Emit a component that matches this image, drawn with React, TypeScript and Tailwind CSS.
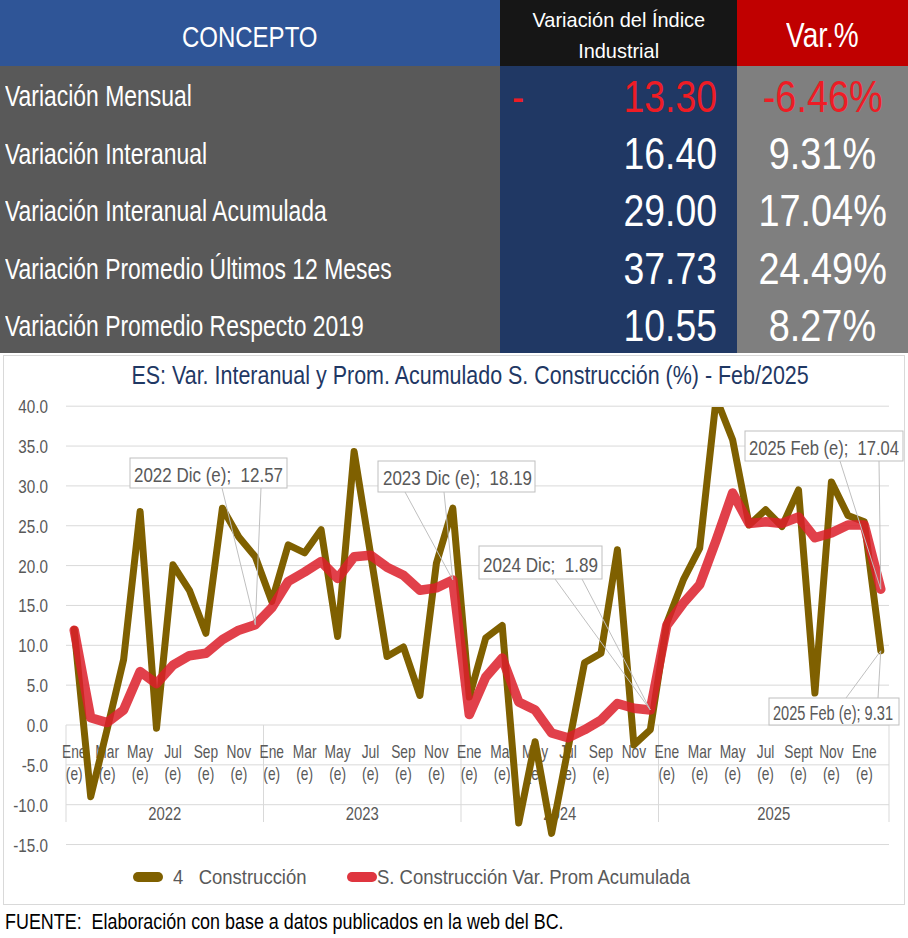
import React from "react";

const brown = [
  12, -9.0, -0.5, 8.2, 26.8, -0.4, 20.1, 16.9, 11.5, 27.2, 23.6, 21.1,
  15.5, 22.6, 21.6, 24.5, 11.1, 34.3, 21.5, 8.6, 9.8, 3.7, 20.3, 27.2,
  3.5, 10.9, 12.5, -12.3, -2.1, -13.6, -3, 7.8, 9.0, 22.0, -2.5, -0.6,
  12.8, 18.2, 22.2, 41, 35.8, 25.1, 27.0, 24.9, 29.5, 4.0, 30.5, 26.3, 25.5, 9.31,
];

const red = [
  11.9, 0.9, 0.3, 1.9, 6.7, 5.2, 7.5, 8.7, 9.0, 10.7, 11.9, 12.57,
  14.7, 18.0, 19.2, 20.5, 18.4, 21.1, 21.3, 19.8, 18.8, 16.9, 17.2, 18.19,
  1.3, 6.0, 8.4, 2.9, 1.9, -1.0, -1.6, -0.6, 0.6, 2.7, 2.1, 1.89,
  12.5, 15.3, 17.6, 23.2, 29.1, 25.3, 25.5, 25.3, 26.1, 23.5, 24.1, 25.1, 25.1, 17.04,
];

// geometría del gráfico (coordenadas de página)
const X0 = 66;
const X1 = 889;
const STEP = (X1 - X0) / 50;
const Y_ZERO = 725;
const PX = 7.97;

const cx = (i: number) => X0 + STEP * (i + 0.5);
const cy = (v: number) => Y_ZERO - v * PX;

const points = (data: number[]) =>
  data.map((v, i) => `${cx(i).toFixed(1)},${cy(v).toFixed(1)}`).join(" ");

const monthLabels: { i: number; name: string; e: boolean }[] = [
  ...[0, 12].flatMap((base) =>
    ["Ene", "Mar", "May", "Jul", "Sep", "Nov"].map((name, k) => ({ i: base + k * 2, name, e: true }))
  ),
  ...["Ene", "Mar", "May", "Jul", "Sep", "Nov"].map((name, k) => ({ i: 24 + k * 2, name, e: k !== 5 })),
  ...["Ene", "Mar", "May", "Jul", "Sept", "Nov", "Ene"].map((name, k) => ({ i: 36 + k * 2, name, e: true })),
];

const years = [
  { label: "2022", x: (66 + 263.5) / 2 },
  { label: "2023", x: (263.5 + 461) / 2 },
  { label: "2024", x: (461 + 658.5) / 2 },
  { label: "2025", x: (658.5 + 889) / 2 },
];

const callouts = [
  { text: "2022 Dic (e);\u00a0 12.57", x: 130, y: 458, w: 157, h: 30, tx: 134, ty: 482, tl: 149, a: 222, b: 261, px: cx(11), py: cy(12.57), top: false },
  { text: "2023 Dic (e);\u00a0 18.19", x: 378, y: 461, w: 157, h: 31, tx: 383, ty: 485, tl: 149, a: 405, b: 444, px: cx(23), py: cy(18.19), top: false },
  { text: "2024 Dic;\u00a0 1.89", x: 479, y: 546, w: 123, h: 33, tx: 483, ty: 571.5, tl: 115, a: 555, b: 582, px: cx(35), py: cy(1.89), top: false },
  { text: "2025 Feb (e);\u00a0 17.04", x: 745, y: 431, w: 158, h: 30, tx: 749, ty: 455, tl: 150, a: 840, b: 879, px: cx(49), py: cy(17.04), top: false },
  { text: "2025 Feb (e); 9.31", x: 769, y: 698, w: 130, h: 27, tx: 773, ty: 720, tl: 120, a: 846, b: 878, px: cx(49), py: cy(9.31), top: true },
];

const rows = [
  { label: "Variación Mensual", value: "13.30", pct: "-6.46%", neg: true },
  { label: "Variación Interanual", value: "16.40", pct: "9.31%", neg: false },
  { label: "Variación Interanual Acumulada", value: "29.00", pct: "17.04%", neg: false },
  { label: "Variación Promedio Últimos 12 Meses", value: "37.73", pct: "24.49%", neg: false },
  { label: "Variación Promedio Respecto 2019", value: "10.55", pct: "8.27%", neg: false },
];

// texto estrecho (la fuente original es condensada)
function T({
  x,
  y,
  s,
  size = 18.6,
  anchor = "middle",
  children,
}: {
  x: number;
  y: number;
  s: number;
  size?: number;
  anchor?: "start" | "middle" | "end";
  children: React.ReactNode;
}) {
  return (
    <text transform={`translate(${x} ${y}) scale(${s} 1)`} fontSize={size} textAnchor={anchor} fill="#595959">
      {children}
    </text>
  );
}

function Chart() {
  const ticks = [40, 35, 30, 25, 20, 15, 10, 5, 0, -5, -10, -15];
  return (
    <svg width={900} height={459} viewBox="4 396 900 459" className="block">
      <defs>
        <clipPath id="plot">
          <rect x={0} y={407} width={908} height={460} />
        </clipPath>
      </defs>
      {ticks.map((t) => (
        <g key={t}>
          <line x1={X0} x2={X1} y1={cy(t)} y2={cy(t)} stroke="#d9d9d9" strokeWidth={1} />
          <T x={48} y={cy(t) + 7} s={0.82} anchor="end">
            {t.toFixed(1)}
          </T>
        </g>
      ))}
      {[66, 263.5, 461, 658.5, 889].map((x) => (
        <line key={x} x1={x} x2={x} y1={Y_ZERO} y2={822} stroke="#d9d9d9" strokeWidth={1} />
      ))}
      {monthLabels.map((m) => (
        <g key={m.i}>
          <T x={cx(m.i)} y={758} s={0.74}>
            {m.name}
          </T>
          {m.e && (
            <T x={cx(m.i)} y={780} s={0.74}>
              (e)
            </T>
          )}
        </g>
      ))}
      {years.map((y) => (
        <T key={y.label} x={y.x} y={820} s={0.8}>
          {y.label}
        </T>
      ))}

      <polyline
        points={points(brown)}
        fill="none"
        stroke="#7f6000"
        strokeWidth={7}
        strokeLinejoin="round"
        strokeLinecap="round"
        clipPath="url(#plot)"
      />
      <polyline
        points={points(red)}
        fill="none"
        stroke="#dc1f2a"
        strokeOpacity={0.85}
        strokeWidth={9.5}
        strokeLinejoin="round"
        strokeLinecap="round"
      />

      {callouts.map((c) => {
        const edge = c.top ? c.y : c.y + c.h;
        return (
          <g key={c.text}>
            <line x1={c.a} y1={edge} x2={c.px} y2={c.py} stroke="#bfbfbf" strokeWidth={1} />
            <line x1={c.b} y1={edge} x2={c.px} y2={c.py} stroke="#bfbfbf" strokeWidth={1} />
            <rect x={c.x} y={c.y} width={c.w} height={c.h} fill="white" stroke="#bfbfbf" strokeWidth={1} />
            <text
              x={c.tx}
              y={c.ty}
              textLength={c.tl}
              lengthAdjust="spacingAndGlyphs"
              fontSize={20.5}
              fill="#595959"
            >
              {c.text}
            </text>
          </g>
        );
      })}
    </svg>
  );
}

export default function App() {
  return (
    <div className="w-[908px] bg-white font-['Liberation_Sans',Arial,sans-serif]">
      {/* Tabla resumen */}
      <div className="grid grid-cols-[500px_237px_171px] text-white">
        <div className="h-[66px] bg-[#2f5597] flex items-center justify-center pt-[6px] text-[30px]">
          <span className="inline-block scale-x-[0.8]">CONCEPTO</span>
        </div>
        <div className="h-[66px] bg-[#161616] flex flex-col items-center justify-center pt-[4px] text-[21px] leading-[31px]">
          <span className="inline-block scale-x-[0.95] whitespace-nowrap">Variación del Índice</span>
          <span className="inline-block scale-x-[0.95]">Industrial</span>
        </div>
        <div className="h-[66px] bg-[#c00000] flex items-center justify-center pt-[4px] text-[35px]">
          <span className="inline-block scale-x-[0.8]">Var.%</span>
        </div>

        {rows.map((r) => (
          <React.Fragment key={r.label}>
            <div className="h-[57.4px] bg-[#595959] flex items-center pl-[5px] pt-[5px] text-[29px]">
              <span className="inline-block origin-left scale-x-[0.79] whitespace-nowrap">{r.label}</span>
            </div>
            <div
              className={`h-[57.4px] bg-[#203864] flex items-center justify-between pl-[12px] pr-[20px] pt-[4px] text-[44px] ${
                r.neg ? "text-[#ee1c25]" : "text-white"
              }`}
            >
              <span className="inline-block origin-left scale-x-[0.83]">{r.neg ? "-" : ""}</span>
              <span className="inline-block origin-right scale-x-[0.85]">{r.value}</span>
            </div>
            <div
              className={`h-[57.4px] bg-[#7f7f7f] flex items-center justify-center pt-[4px] text-[44px] ${
                r.neg ? "text-[#ee1c25]" : "text-white"
              }`}
            >
              <span className="inline-block scale-x-[0.86] whitespace-nowrap">{r.pct}</span>
            </div>
          </React.Fragment>
        ))}
      </div>

      {/* Gráfico */}
      <div className="ml-[3px] mt-[2px] w-[902px] h-[550px] border border-[#d9d9d9] flex flex-col">
        <div className="h-[40px] flex items-center justify-center pl-[32px] text-[26.5px] text-[#1f3864]">
          <span className="inline-block scale-x-[0.81] whitespace-nowrap">
            ES: Var. Interanual y Prom. Acumulado S. Construcción (%) - Feb/2025
          </span>
        </div>
        <Chart />
        <div className="h-[44px] flex items-center text-[21px] text-[#595959]">
          <span className="ml-[129px] w-[30px] h-[10px] rounded-full bg-[#7f6000]" />
          <span className="ml-[10px] w-[174px] whitespace-pre">
            <span className="inline-block origin-left scale-x-[0.88]">4   Construcción</span>
          </span>
          <span className="w-[30px] h-[10px] rounded-full bg-[#dc1f2a] opacity-90" />
          <span className="whitespace-nowrap">
            <span className="inline-block origin-left scale-x-[0.88]">S. Construcción Var. Prom Acumulada</span>
          </span>
        </div>
      </div>

      {/* Fuente */}
      <div className="h-[33px] flex items-center pl-[5px] text-[22.4px] text-black">
        <span className="inline-block origin-left scale-x-[0.8] whitespace-pre">
          FUENTE:  Elaboración con base a datos publicados en la web del BC.
        </span>
      </div>
    </div>
  );
}
